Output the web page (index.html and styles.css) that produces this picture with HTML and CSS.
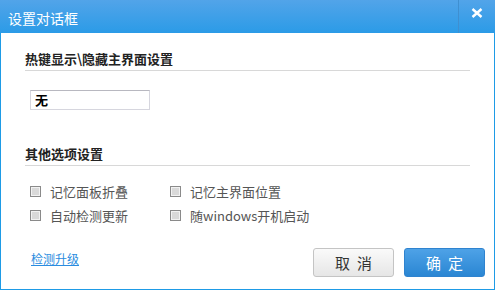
FILE: index.html
```html
<!DOCTYPE html>
<html lang="zh-CN">
<head>
    <meta charset="UTF-8">
    <title>设置对话框</title>
    <link rel="stylesheet" href="styles.css">
</head>
<body>
    <div class="dialog">
        <div class="titlebar">
            <div class="title">设置对话框</div>
            <div class="close">
                <svg width="12" height="10" viewBox="0 0 12 10">
                    <path d="M1.5 1 L10.5 9 M10.5 1 L1.5 9" stroke="#fff" stroke-width="2.4" fill="none"/>
                </svg>
            </div>
        </div>
        <div class="content">
            <div class="section-title">热键显示\隐藏主界面设置</div>
            <div class="hotkey">无</div>

            <div class="section-title second">其他选项设置</div>
            <div class="options">
                <label class="option"><span class="check"></span>记忆面板折叠</label>
                <label class="option"><span class="check"></span>记忆主界面位置</label>
                <label class="option"><span class="check"></span>自动检测更新</label>
                <label class="option"><span class="check"></span>随windows开机启动</label>
            </div>

            <div class="footer">
                <a class="link" href="#">检测升级</a>
                <div class="buttons">
                    <button class="btn cancel">取消</button>
                    <button class="btn ok">确定</button>
                </div>
            </div>
        </div>
    </div>
</body>
</html>
```

FILE: styles.css
```css
body {
    margin: 0;
    padding: 0;
    font-family: "Noto Sans CJK SC", "Noto Sans", sans-serif;
}
.dialog {
    width: 495px;
    height: 290px;
    display: flex;
    flex-direction: column;
}
.titlebar {
    height: 33px;
    display: flex;
    align-items: stretch;
    background: linear-gradient(#52a4e9, #2b9be7);
}
.title {
    flex: 1;
    color: #fff;
    font-size: 14px;
    line-height: 36px;
    padding-left: 8px;
}
.close {
    width: 37px;
    border-left: 1px solid #3f8fd0;
    display: flex;
    justify-content: center;
    padding-top: 8px;
    box-sizing: border-box;
}
.content {
    flex: 1;
    border: 1px solid #1e9be6;
    border-top: none;
    padding: 17px 24px 0 24px;
    display: flex;
    flex-direction: column;
}
.section-title {
    font-size: 13px;
    font-weight: bold;
    color: #222;
    line-height: 18px;
    padding-bottom: 2px;
    border-bottom: 1px solid #d8d8d8;
}
.section-title.second {
    margin-top: 35px;
}
.hotkey {
    margin: 19px 0 0 5px;
    height: 18px;
    border: 1px solid #d6d6de;
    border-top-color: #b8b8c0;
    font-size: 13px;
    font-weight: bold;
    line-height: 18px;
    padding-left: 4px;
    width: 114px;
    color: #000;
}
.options {
    display: grid;
    grid-template-columns: 140px 160px;
    row-gap: 5px;
    margin: 16px 0 0 5px;
}
.option {
    display: flex;
    align-items: center;
    font-size: 13px;
    color: #555;
    line-height: 19px;
}
.check {
    width: 9px;
    height: 9px;
    border: 1px solid #8a8a8a;
    background: #d9d9d9;
    box-shadow: inset 0 0 0 1px #f2f2f2;
    margin-right: 9px;
}
.footer {
    display: flex;
    justify-content: space-between;
    align-items: flex-start;
    margin-top: 23px;
}
.link {
    font-size: 12px;
    color: #2a8ce0;
    margin: 3px 0 0 6px;
    line-height: 16px;
}
.buttons {
    display: flex;
    gap: 10px;
    margin-right: -15px;
}
.btn {
    width: 81px;
    height: 29px;
    border-radius: 3px;
    font-family: "Noto Sans CJK SC", sans-serif;
    font-size: 15px;
    letter-spacing: 7px;
    padding: 0 0 0 7px;
    cursor: pointer;
}
.cancel {
    border: 1px solid #c4c4c4;
    background: linear-gradient(#fafafa, #e6e6e6);
    color: #333;
}
.ok {
    border: 1px solid #2f83cf;
    background: linear-gradient(#4ea2e7, #2a86d3);
    color: #fff;
}
```
